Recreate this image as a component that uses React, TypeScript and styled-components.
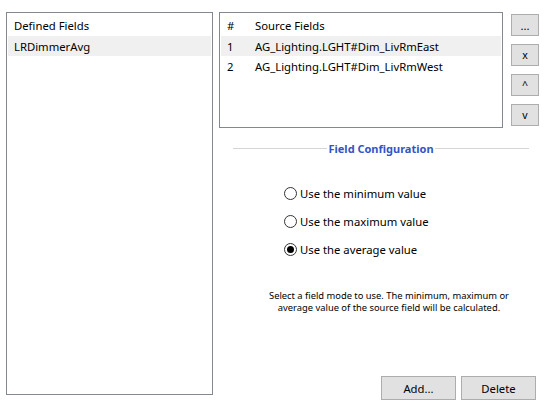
import React from "react";
import styled, { createGlobalStyle } from "styled-components";

const Global = createGlobalStyle`
  html, body { margin: 0; padding: 0; background: #fff; }
  body { font-family: "Noto Sans", "Open Sans", sans-serif; color: #000; }
`;

const Window = styled.div`
  width: 547px;
  height: 410px;
  box-sizing: border-box;
  padding: 12px 6px 0 6px;
  display: flex;
  gap: 6px;
  background: #fff;
  font-size: 11.3px;
`;

const ListBox = styled.div<{ $w: number; $h: number }>`
  width: ${(p) => p.$w}px;
  height: ${(p) => p.$h}px;
  box-sizing: border-box;
  border: 1px solid #828790;
  background: #fff;
  padding-top: 2px;
  display: flex;
  flex-direction: column;
`;

const Row = styled.div<{ $header?: boolean; $selected?: boolean }>`
  display: flex;
  align-items: center;
  height: ${(p) => (p.$header ? 21 : 20)}px;
  margin: 0 1px;
  padding-left: 6px;
  background: ${(p) => (p.$selected ? "#f0f0f0" : "transparent")};
  white-space: nowrap;
`;

const Cell = styled.span<{ $w?: number }>`
  width: ${(p) => (p.$w ? `${p.$w}px` : "auto")};
  flex: ${(p) => (p.$w ? "none" : "1")};
`;

const RightArea = styled.div`
  width: 322px;
  height: 100%;
  display: flex;
  flex-direction: column;
`;

const TopRow = styled.div`
  display: flex;
  gap: 8px;
`;

const ButtonCol = styled.div`
  display: flex;
  flex-direction: column;
  gap: 8px;
  padding-top: 2px;
`;

const Button = styled.button<{ $w: number; $h: number }>`
  width: ${(p) => p.$w}px;
  height: ${(p) => p.$h}px;
  box-sizing: border-box;
  border: 1px solid #adadad;
  background: #e1e1e1;
  font-family: inherit;
  font-size: 11.3px;
  color: #000;
  padding: 0;
  display: flex;
  align-items: center;
  justify-content: center;
`;

const SmallGlyph = styled.span`
  font-size: 10.5px;
`;

const Divider = styled.div`
  display: flex;
  align-items: center;
  margin: 12px 12px 0 14px;
  height: 16px;
`;

const Line = styled.div`
  flex: 1;
  height: 1px;
  background: #d5d5d5;
`;

const Title = styled.span`
  color: #3353c8;
  font-weight: bold;
  font-size: 11px;
  padding: 0 1px;
`;

const RadioGroup = styled.div`
  display: flex;
  flex-direction: column;
  margin-top: 23px;
  padding-left: 65px;
`;

const RadioRow = styled.label`
  display: flex;
  align-items: center;
  height: 28px;
  gap: 3px;
`;

const RadioCircle = styled.span<{ $checked?: boolean }>`
  width: 13px;
  height: 13px;
  box-sizing: border-box;
  border: 1px solid #333;
  border-radius: 50%;
  background: #fff;
  display: flex;
  align-items: center;
  justify-content: center;
  &::after {
    content: "";
    width: 7px;
    height: 7px;
    border-radius: 50%;
    background: ${(p) => (p.$checked ? "#000" : "transparent")};
  }
`;

const Help = styled.div`
  margin-top: 27px;
  padding-left: 18px;
  text-align: center;
  font-size: 9.35px;
  line-height: 12px;
  color: #000;
`;

const BottomBar = styled.div`
  margin-top: auto;
  display: flex;
  justify-content: flex-end;
  gap: 5px;
  padding: 0 5px 10px 0;
`;

const options = [
  { label: "Use the minimum value", checked: false },
  { label: "Use the maximum value", checked: false },
  { label: "Use the average value", checked: true },
];

const sources = ["AG_Lighting.LGHT#Dim_LivRmEast", "AG_Lighting.LGHT#Dim_LivRmWest"];

export default function App() {
  return (
    <>
      <Global />
      <Window>
        <ListBox $w={207} $h={383}>
          <Row $header>Defined Fields</Row>
          <Row $selected>LRDimmerAvg</Row>
        </ListBox>
        <RightArea>
          <TopRow>
            <ListBox $w={284} $h={116}>
              <Row $header>
                <Cell $w={28}>#</Cell>
                <Cell>Source Fields</Cell>
              </Row>
              {sources.map((s, i) => (
                <Row key={s} $selected={i === 0}>
                  <Cell $w={28}>{i + 1}</Cell>
                  <Cell>{s}</Cell>
                </Row>
              ))}
            </ListBox>
            <ButtonCol>
              <Button $w={28} $h={22}>...</Button>
              <Button $w={28} $h={22}><SmallGlyph>x</SmallGlyph></Button>
              <Button $w={28} $h={22}><SmallGlyph>^</SmallGlyph></Button>
              <Button $w={28} $h={22}><SmallGlyph>v</SmallGlyph></Button>
            </ButtonCol>
          </TopRow>
          <Divider>
            <Line />
            <Title>Field Configuration</Title>
            <Line />
          </Divider>
          <RadioGroup>
            {options.map((o) => (
              <RadioRow key={o.label}>
                <RadioCircle $checked={o.checked} />
                {o.label}
              </RadioRow>
            ))}
          </RadioGroup>
          <Help>
            Select a field mode to use. The minimum, maximum or
            <br />
            average value of the source field will be calculated.
          </Help>
          <BottomBar>
            <Button $w={75} $h={24}>Add...</Button>
            <Button $w={75} $h={24}>Delete</Button>
          </BottomBar>
        </RightArea>
      </Window>
    </>
  );
}
